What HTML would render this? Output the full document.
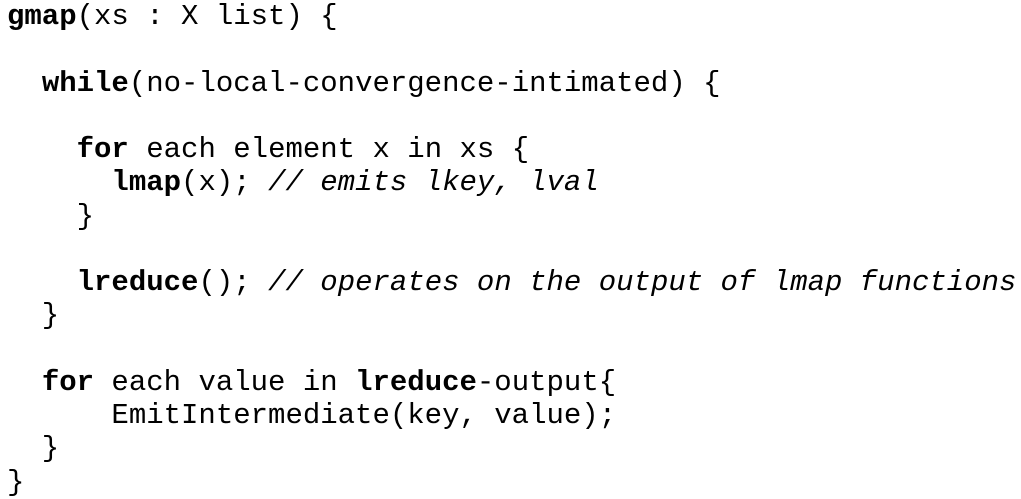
<!DOCTYPE html>
<html><head><meta charset="utf-8"><style>
html,body{margin:0;padding:0;background:#fff;width:1021px;height:499px;overflow:hidden}
pre{margin:0;position:absolute;left:7px;top:0;font-family:"Liberation Mono",monospace;font-size:29px;line-height:33.27px;color:#000;font-weight:normal}
b{font-weight:bold}
i{font-style:italic}
</style></head><body>
<pre><b>gmap</b>(xs : X list) {

  <b>while</b>(no-local-convergence-intimated) {

    <b>for</b> each element x in xs {
      <b>lmap</b>(x); <i>// emits lkey, lval</i>
    }

    <b>lreduce</b>(); <i>// operates on the output of lmap functions</i>
  }

  <b>for</b> each value in <b>lreduce</b>-output{
      EmitIntermediate(key, value);
  }
}</pre>
</body></html>
